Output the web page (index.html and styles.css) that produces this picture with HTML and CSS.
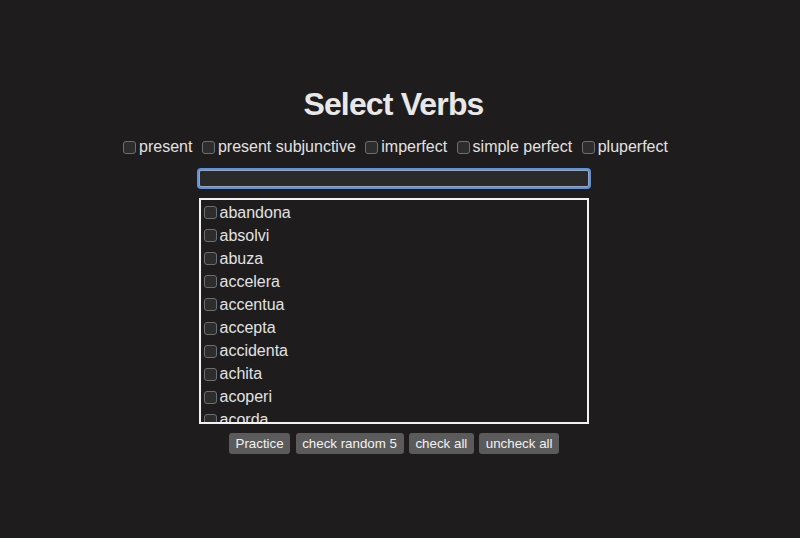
FILE: index.html
```html
<!DOCTYPE html>
<html lang="en">
<head>
<meta charset="utf-8">
<title>Select Verbs</title>
<link rel="stylesheet" href="styles.css">
</head>
<body>
<main class="page">
  <h1 class="title">Select Verbs</h1>
  <div class="tenses">
    <label class="tense"><input type="checkbox" class="cb">present</label>
    <label class="tense"><input type="checkbox" class="cb">present subjunctive</label>
    <label class="tense"><input type="checkbox" class="cb">imperfect</label>
    <label class="tense"><input type="checkbox" class="cb">simple perfect</label>
    <label class="tense"><input type="checkbox" class="cb">pluperfect</label>
  </div>
  <input type="text" class="search">
  <div class="verbs">
    <label class="verb"><input type="checkbox" class="cb">abandona</label>
    <label class="verb"><input type="checkbox" class="cb">absolvi</label>
    <label class="verb"><input type="checkbox" class="cb">abuza</label>
    <label class="verb"><input type="checkbox" class="cb">accelera</label>
    <label class="verb"><input type="checkbox" class="cb">accentua</label>
    <label class="verb"><input type="checkbox" class="cb">accepta</label>
    <label class="verb"><input type="checkbox" class="cb">accidenta</label>
    <label class="verb"><input type="checkbox" class="cb">achita</label>
    <label class="verb"><input type="checkbox" class="cb">acoperi</label>
    <label class="verb"><input type="checkbox" class="cb">acorda</label>
    <label class="verb"><input type="checkbox" class="cb">acumula</label>
  </div>
  <div class="actions">
    <button class="btn">Practice</button>
    <button class="btn">check random 5</button>
    <button class="btn">check all</button>
    <button class="btn">uncheck all</button>
  </div>
</main>
</body>
</html>
```
FILE: styles.css
```css
html, body {
  margin: 0;
  padding: 0;
  background: #1e1c1d;
  color: #e4e4e4;
  font-family: "Liberation Sans", Arial, sans-serif;
}

.page {
  width: 787px;
  height: 538px;
  box-sizing: border-box;
  padding-top: 86px;
  display: flex;
  flex-direction: column;
  align-items: center;
  overflow: hidden;
}

.title {
  margin: 0;
  font-size: 32px;
  line-height: 37px;
  font-weight: bold;
  letter-spacing: -0.85px;
  color: #e8e8e8;
}

.tenses {
  margin-top: 14px;
  display: flex;
  gap: 9.5px;
  font-size: 16px;
  line-height: 20px;
  padding-left: 4px;
}

.tense {
  display: flex;
  align-items: center;
  color: #e2e2e2;
}

.cb {
  appearance: none;
  -webkit-appearance: none;
  width: 13px;
  height: 13px;
  margin: 0 3px 0 0;
  box-sizing: border-box;
  border: 1px solid #6e6e6e;
  border-radius: 3px;
  background: #2e2d2e;
  flex: none;
}

.search {
  margin-top: 13px;
  width: 390px;
  height: 17px;
  box-sizing: border-box;
  border: 1px solid #9aa6b8;
  border-radius: 2px;
  background: #2b2a2b;
  box-shadow: 0 0 0 2px #5f92dc;
  outline: none;
  padding: 0 4px;
  color: #e4e4e4;
}

.verbs {
  margin-top: 11px;
  width: 390px;
  height: 226px;
  box-sizing: border-box;
  border: 2px solid #f2f2f2;
  overflow: hidden;
  padding: 1px 0 0 3px;
  display: flex;
  flex-direction: column;
}

.verb {
  display: flex;
  align-items: center;
  height: 23.1px;
  flex: none;
  font-size: 16px;
  color: #e2e2e2;
}

.verb .cb {
  margin-right: 3px;
}

.actions {
  margin-top: 9px;
  display: flex;
  gap: 5.3px;
  padding-left: 1px;
}

.btn {
  display: flex;
  align-items: center;
  height: 21px;
  padding: 0 6.6px;
  border: none;
  border-radius: 3px;
  background: #5b5b5b;
  color: #f2f2f2;
  font-family: "Liberation Sans", Arial, sans-serif;
  font-size: 13.33px;
  line-height: 16px;
}
```
